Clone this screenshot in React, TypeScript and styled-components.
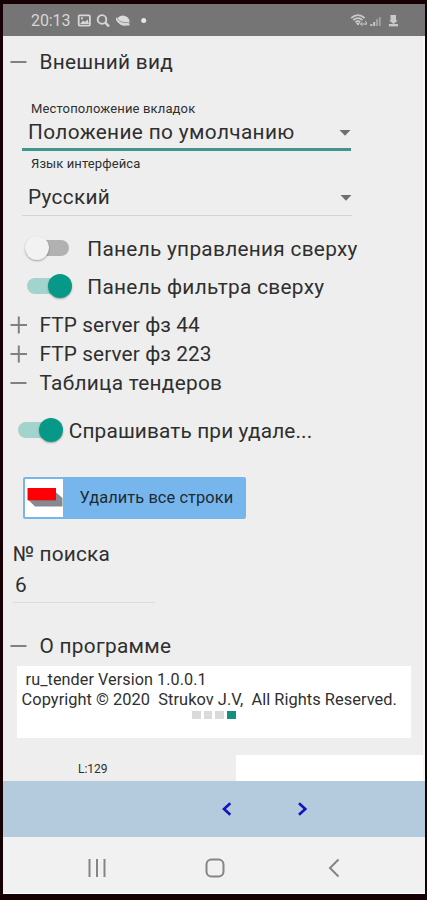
import React from "react";
import styled, { createGlobalStyle } from "styled-components";

const GlobalStyle = createGlobalStyle`
  * { box-sizing: border-box; }
  body { margin: 0; background: #160003; font-family: Roboto, "Noto Sans", sans-serif; color: #2f2f2f; }
`;

const Phone = styled.div`
  width: 422px;
  height: 890px;
  margin: 4px 2px 6px 3px;
  display: flex;
  flex-direction: column;
  background: #eeeeee;
  overflow: hidden;
`;

const StatusBar = styled.header`
  height: 32px;
  flex: none;
  display: flex;
  align-items: center;
  justify-content: space-between;
  padding: 1px 25px 0 28px;
  background: #757575;
  color: #d6d6d6;
`;

const Clock = styled.span`
  width: 46px;
  font-size: 16px;
  letter-spacing: -0.1px;
`;

const StatusGroup = styled.div`
  display: flex;
  align-items: center;
`;

const Content = styled.main`
  height: 745px;
  flex: none;
  display: flex;
  flex-direction: column;
  border-right: 2px solid #f6f6f2;
`;

const Label = styled.span<{ $size?: number; $spacing?: number }>`
  font-size: ${p => p.$size ?? 20.8}px;
  letter-spacing: ${p => p.$spacing ?? 0.29}px;
  white-space: pre;
`;

const SectionRow = styled.div<{ $top?: number; $height?: number }>`
  height: ${p => p.$height ?? 29.4}px;
  margin-top: ${p => p.$top ?? 0}px;
  display: flex;
  align-items: center;
  gap: 12px;
  padding-left: 6.5px;
  flex: none;
`;

const FieldLabel = styled.div<{ $top: number }>`
  height: 16px;
  margin: ${p => p.$top}px 0 0 28px;
  display: flex;
  align-items: center;
  flex: none;
`;

const Select = styled.div<{ $active?: boolean; $top?: number }>`
  width: ${p => (p.$active ? 329 : 330)}px;
  height: ${p => (p.$active ? 35 : 37)}px;
  margin: ${p => p.$top ?? 0}px 0 0 19px;
  padding: 0 0 ${p => (p.$active ? 0 : 1)}px 6px;
  display: flex;
  align-items: center;
  justify-content: space-between;
  border-bottom: ${p => (p.$active ? "3px solid #43958c" : "1px solid #d3d3d3")};
  flex: none;
`;

const SwitchRow = styled.label<{ $top?: number; $left: number; $gap: number }>`
  height: 38px;
  margin-top: ${p => p.$top ?? 0}px;
  padding-left: ${p => p.$left}px;
  display: flex;
  align-items: center;
  gap: ${p => p.$gap}px;
  flex: none;
`;

const Track = styled.span<{ $on: boolean }>`
  width: 43px;
  height: 16px;
  display: flex;
  align-items: center;
  justify-content: ${p => (p.$on ? "flex-end" : "flex-start")};
  border-radius: 8px;
  background: ${p => (p.$on ? "#a3d3cd" : "#b1b1b1")};
  margin-top: -3px;
`;

const Thumb = styled.span<{ $on: boolean }>`
  width: 24px;
  height: 24px;
  flex: none;
  margin: ${p => (p.$on ? "0 -2px 0 0" : "0 0 0 -1px")};
  border-radius: 50%;
  background: ${p => (p.$on ? "#079987" : "#f2f2f2")};
  box-shadow: 0 1px 2px rgba(0, 0, 0, 0.32);
`;

const DeleteButton = styled.button`
  width: 223px;
  height: 42px;
  margin: 27px 0 0 20px;
  padding: 2px;
  display: flex;
  align-items: center;
  gap: 16.5px;
  border: 0;
  border-radius: 2px;
  background: #77b6ec;
  font-family: inherit;
  color: #202a33;
  flex: none;
`;

const ButtonText = styled.span`
  padding-bottom: 2px;
`;

const InputLine = styled.div`
  width: 142px;
  height: 38px;
  margin-left: 10px;
  padding: 2px 0 0 2px;
  display: flex;
  align-items: center;
  border-bottom: 1px solid #dcdcdc;
  flex: none;
`;

const SearchLabel = styled.div`
  height: 22px;
  margin: 24px 0 0 9.5px;
  display: flex;
  align-items: center;
  flex: none;
`;

const About = styled.section`
  width: 394px;
  height: 72px;
  margin: 5px 0 0 14px;
  padding: 4px 0 0 4.6px;
  background: #fff;
  color: #303030;
  flex: none;
`;

const AboutLine = styled.div<{ $indent?: number }>`
  height: 19.5px;
  padding-left: ${p => p.$indent ?? 0}px;
  display: flex;
  align-items: center;
`;

const Dots = styled.div`
  display: flex;
  gap: 3px;
  margin: 1.5px 0 0 170.5px;
`;

const Dot = styled.span<{ $active?: boolean }>`
  width: ${p => (p.$active ? 9 : 8.5)}px;
  height: 8.5px;
  background: ${p => (p.$active ? "#14917e" : "#dadada")};
`;

const Peek = styled.div`
  height: 26px;
  margin-top: 17px;
  display: grid;
  grid-template-columns: 233px 1fr;
  flex: none;
`;

const PeekLabel = styled.div`
  padding: 1px 0 0 75px;
  display: flex;
  align-items: center;
`;

const PeekPanel = styled.div`
  background: #fff;
`;

const Pager = styled.nav`
  height: 56px;
  flex: none;
  display: flex;
  align-items: center;
  gap: 63px;
  padding: 0 0 0 218px;
  background: #b4cadd;
`;

const SystemNav = styled.footer`
  flex: 1;
  display: flex;
  align-items: center;
  padding: 5px 0 0 84px;
  background: #f1f1f1;
  border-bottom: 1px solid #fff;
`;

const NavIcon = styled.svg<{ $before?: number }>`
  margin-left: ${p => p.$before ?? 0}px;
`;

function Fold({ open }: { open?: boolean }) {
  return (
    <svg width="18" height="18" viewBox="0 0 18 18" stroke="#808080" strokeWidth="2">
      <path d={open ? "M0.5 9H16.5" : "M0.5 9H17M8.8 0.5V17.5"} />
    </svg>
  );
}

function Arrow() {
  return (
    <svg width="12" height="10" viewBox="0 0 12 10">
      <path d="M0.5 3H11.5L6 8.8Z" fill="#6f6f6f" />
    </svg>
  );
}

function Toggle({ on }: { on: boolean }) {
  return (
    <Track $on={on}>
      <Thumb $on={on} />
    </Track>
  );
}

function Chevron({ right }: { right?: boolean }) {
  return (
    <svg width="12" height="16" viewBox="0 0 12 16" fill="none" stroke="#1512bd" strokeWidth="2.6">
      <path d={right ? "M3 2.2L9.3 8L3 13.8" : "M9.3 2.2L3 8L9.3 13.8"} />
    </svg>
  );
}

function NotificationIcons() {
  return (
    <svg width="72" height="18" viewBox="0 0 72 18">
      <rect x="1.7" y="3.4" width="11.2" height="10.2" rx="1" fill="none" stroke="#d6d6d6" strokeWidth="1.8" />
      <path d="M3 12L6 8.5L8 10L10.5 7.5L12 12Z" fill="#d6d6d6" />
      <circle cx="5" cy="6.3" r="1.1" fill="#d6d6d6" />
      <circle cx="25" cy="7.4" r="4.3" fill="none" stroke="#d6d6d6" strokeWidth="1.9" />
      <path d="M28.2 10.6L32 14.4" stroke="#d6d6d6" strokeWidth="2.4" />
      <ellipse cx="46.5" cy="8.6" rx="6.2" ry="4.9" transform="rotate(18 46.5 8.6)" fill="#dadada" />
      <path d="M40.5 6.6C42 10 48 11.6 53.5 10" fill="none" stroke="#8a8a8a" strokeWidth="0.9" />
      <path d="M39.9 5.8C38.5 9 46 14 52.6 12.4" fill="none" stroke="#d6d6d6" strokeWidth="1.6" />
      <circle cx="66.7" cy="8.6" r="2.5" fill="#e6e6e6" />
    </svg>
  );
}

function ConnectionIcons() {
  return (
    <svg width="50" height="18" viewBox="0 0 50 18" fill="none" stroke="#c9c9c9">
      <path d="M1.2 6Q8 0.2 14.6 6M3.3 8.1Q8 4.2 12.4 8.1M5.5 10.3Q8 8.2 10.2 10.3" strokeWidth="1.8" />
      <path d="M6.7 11.5L8 13L9.2 11.5Z" fill="#c9c9c9" />
      <path d="M10.5 12H17M12.5 10.2L10.5 12L12.5 13.8M15 9.2L17 11L15 12.6" strokeWidth="1" />
      <path d="M21.3 14V12M24.2 14V10" strokeWidth="2" />
      <path d="M27 14V7.3M29.8 14V5" stroke="#a3a3a3" strokeWidth="1.9" />
      <path d="M40.5 3H46V8.5H48L43.5 12L39 8.5H40.5Z" fill="#c9c9c9" stroke="none" />
      <path d="M38.9 13.2H48" strokeWidth="2.4" />
    </svg>
  );
}

function StripGlyph() {
  return (
    <svg width="38" height="38" viewBox="0 0 38 38">
      <rect width="38" height="38" fill="#fff" />
      <path d="M3 20.5L10 27.5H37.5V19L30.5 13Z" fill="#858990" />
      <rect x="2.5" y="9" width="28.5" height="12.3" fill="#fc0006" />
    </svg>
  );
}

export default function App() {
  return (
    <>
      <GlobalStyle />
      <Phone>
        <StatusBar>
          <StatusGroup>
            <Clock>20:13</Clock>
            <NotificationIcons />
          </StatusGroup>
          <ConnectionIcons />
        </StatusBar>

        <Content>
          <SectionRow $top={11} $height={30}>
            <Fold open />
            <Label>Внешний вид</Label>
          </SectionRow>

          <FieldLabel $top={23}>
            <Label $size={13} $spacing={0.14}>Местоположение вкладок</Label>
          </FieldLabel>
          <Select $active>
            <Label $spacing={0.36}>Положение по умолчанию</Label>
            <Arrow />
          </Select>
          <FieldLabel $top={4}>
            <Label $size={13} $spacing={0.1}>Язык интерфейса</Label>
          </FieldLabel>
          <Select $top={8}>
            <Label $spacing={0.3}>Русский</Label>
            <Arrow />
          </Select>

          <SwitchRow $top={14} $left={23} $gap={18.3}>
            <Toggle on={false} />
            <Label>Панель управления сверху</Label>
          </SwitchRow>
          <SwitchRow $left={24} $gap={17.3}>
            <Toggle on />
            <Label>Панель фильтра сверху</Label>
          </SwitchRow>

          <SectionRow $top={4}>
            <Fold />
            <Label $spacing={0.1}>FTP server фз 44</Label>
          </SectionRow>
          <SectionRow>
            <Fold />
            <Label $spacing={0.1}>FTP server фз 223</Label>
          </SectionRow>
          <SectionRow>
            <Fold open />
            <Label>Таблица тендеров</Label>
          </SectionRow>

          <SwitchRow $top={14} $left={15} $gap={7.8}>
            <Toggle on />
            <Label $spacing={0.14}>Спрашивать при удале...</Label>
          </SwitchRow>

          <DeleteButton>
            <StripGlyph />
            <ButtonText>
              <Label $size={16.4} $spacing={0.08}>Удалить все строки</Label>
            </ButtonText>
          </DeleteButton>

          <SearchLabel>
            <Label $spacing={0.21}>№ поиска</Label>
          </SearchLabel>
          <InputLine>
            <Label>6</Label>
          </InputLine>

          <SectionRow $top={28} $height={30}>
            <Fold open />
            <Label>О программе</Label>
          </SectionRow>
          <About>
            <AboutLine $indent={4}>
              <Label $size={16.2} $spacing={0.07}>ru_tender Version 1.0.0.1</Label>
            </AboutLine>
            <AboutLine>
              <Label $size={16.4} $spacing={0.04}>Copyright © 2020  Strukov J.V,  All Rights Reserved.</Label>
            </AboutLine>
            <Dots>
              <Dot />
              <Dot />
              <Dot />
              <Dot $active />
            </Dots>
          </About>
          <Peek>
            <PeekLabel>
              <Label $size={12} $spacing={0}>L:129</Label>
            </PeekLabel>
            <PeekPanel />
          </Peek>
        </Content>

        <Pager>
          <Chevron />
          <Chevron right />
        </Pager>
        <SystemNav>
          <NavIcon width="20" height="20" viewBox="0 0 20 20" stroke="#858585" strokeWidth="2">
            <path d="M2.5 1V19M10 1V19M17.5 1V19" />
          </NavIcon>
          <NavIcon $before={98} width="20" height="20" viewBox="0 0 20 20" fill="none" stroke="#858585" strokeWidth="2">
            <rect x="1.5" y="1.5" width="17" height="17" rx="5" />
          </NavIcon>
          <NavIcon $before={103} width="12" height="20" viewBox="0 0 12 20" fill="none" stroke="#858585" strokeWidth="2">
            <path d="M10.5 1.5L2 10L10.5 18.5" />
          </NavIcon>
        </SystemNav>
      </Phone>
    </>
  );
}
